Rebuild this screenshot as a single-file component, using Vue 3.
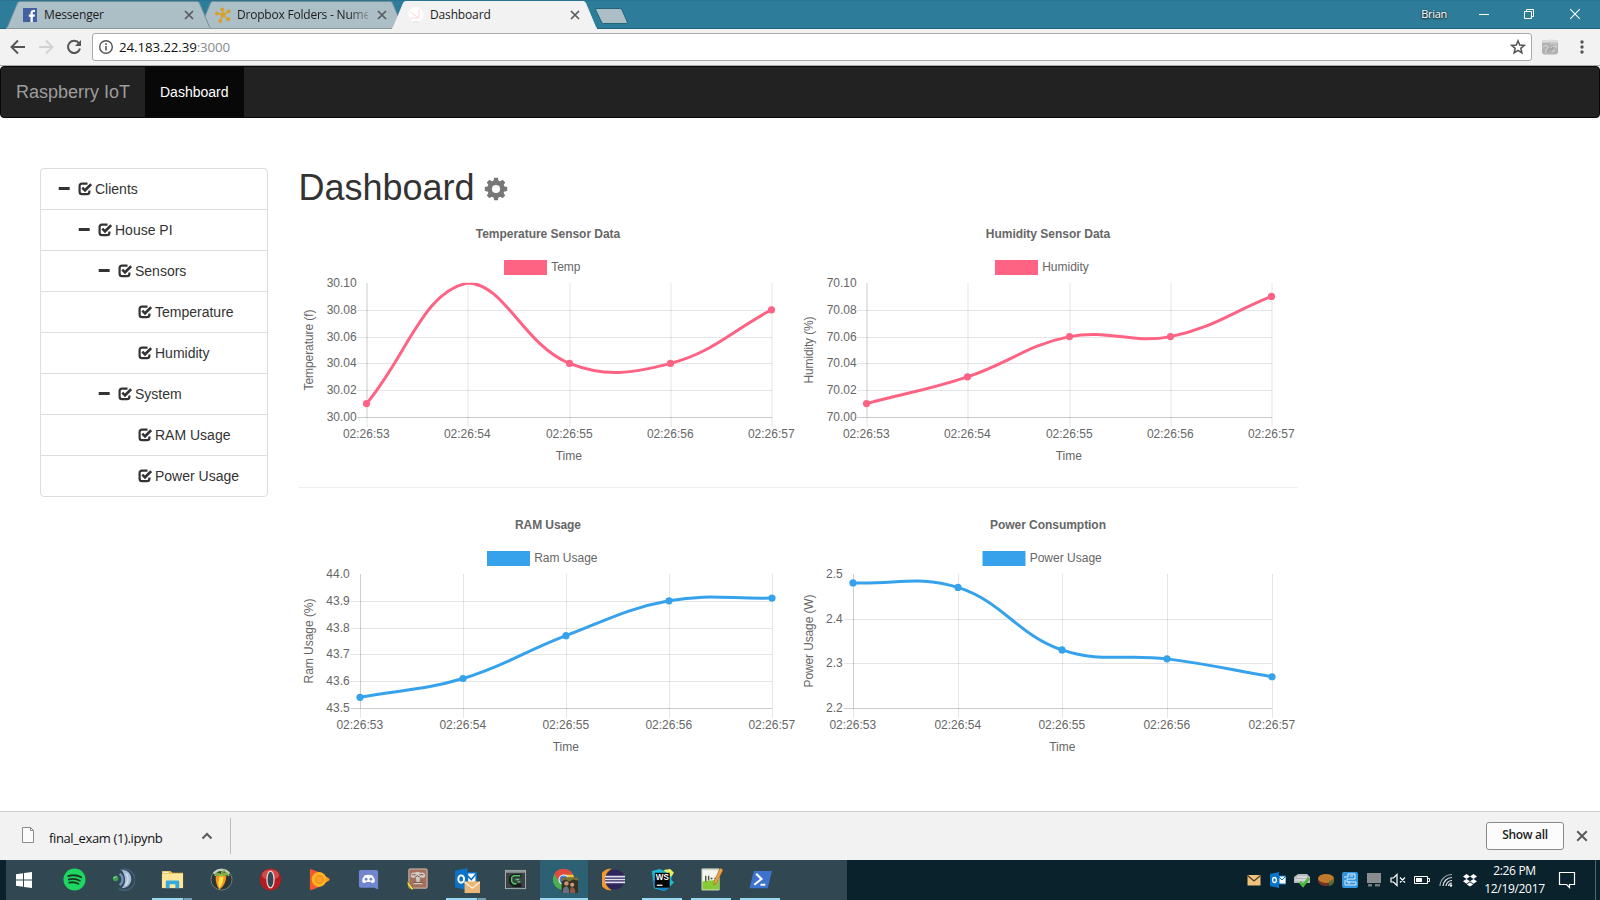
<script setup>
import { h } from 'vue'

const tabs = [
  { title: 'Messenger', icon: 'fb', cls: 'first' },
  { title: 'Dropbox Folders - Nume', icon: 'hub', cls: 'second' },
  { title: 'Dashboard', icon: 'pi', cls: 'active' },
]

const tree = [
  { label: 'Clients', level: 0, open: true },
  { label: 'House PI', level: 1, open: true },
  { label: 'Sensors', level: 2, open: true },
  { label: 'Temperature', level: 3 },
  { label: 'Humidity', level: 3 },
  { label: 'System', level: 2, open: true },
  { label: 'RAM Usage', level: 3 },
  { label: 'Power Usage', level: 3 },
]

const times = ['02:26:53', '02:26:54', '02:26:55', '02:26:56', '02:26:57']
const TOP = 66
const BOTTOM = 200

// Cubic smoothing with tension 0.4, control points kept inside the plot area
function spline(pts) {
  const t = 0.4
  const clamp = (y) => Math.max(TOP, Math.min(BOTTOM, y))
  const ctl = pts.map((p, i) => {
    const a = pts[i - 1] || p
    const b = pts[i + 1] || p
    const d1 = Math.hypot(p.x - a.x, p.y - a.y)
    const d2 = Math.hypot(b.x - p.x, b.y - p.y)
    const f1 = (t * d1) / (d1 + d2)
    const f2 = (t * d2) / (d1 + d2)
    return {
      px: p.x - f1 * (b.x - a.x), py: clamp(p.y - f1 * (b.y - a.y)),
      nx: p.x + f2 * (b.x - a.x), ny: clamp(p.y + f2 * (b.y - a.y)),
    }
  })
  let d = `M${pts[0].x} ${pts[0].y}`
  for (let i = 1; i < pts.length; i++) {
    d += `C${ctl[i - 1].nx} ${ctl[i - 1].ny} ${ctl[i].px} ${ctl[i].py} ${pts[i].x} ${pts[i].y}`
  }
  return d
}

function makeChart(c) {
  const pts = c.values.map((v, i) => ({
    x: c.xs[i] - 0.5,
    y: BOTTOM - ((BOTTOM - TOP) * (v - c.min)) / (c.max - c.min),
  }))
  return { ...c, pts, dots: pts.filter((p) => p.y > TOP + 0.5), d: spline(pts) }
}

const wide = [69, 170, 272, 373, 474]
const six = [66, 93.5, 120.5, 146.5, 173.5, 200.5]
const rows = [
  [
    makeChart({ id: 't', title: 'Temperature Sensor Data', tw: 144.5, legend: 'Temp', lx: 206, axis: 'Temperature (f)', aw: 81, color: '#ff6384', xs: wide, ys: six,
      labels: ['30.10', '30.08', '30.06', '30.04', '30.02', '30.00'], min: 30, max: 30.1, values: [30.01, 30.1, 30.04, 30.04, 30.08] }),
    makeChart({ id: 'h', title: 'Humidity Sensor Data', tw: 124.5, legend: 'Humidity', lx: 197, axis: 'Humidity (%)', aw: 67, color: '#ff6384', xs: wide, ys: six,
      labels: ['70.10', '70.08', '70.06', '70.04', '70.02', '70.00'], min: 70, max: 70.1, values: [70.01, 70.03, 70.06, 70.06, 70.09] }),
  ],
  [
    makeChart({ id: 'r', title: 'RAM Usage', tw: 66, legend: 'Ram Usage', lx: 189, axis: 'Ram Usage (%)', aw: 85, color: '#36a2eb', xs: [62.5, 165.5, 268.5, 371.5, 474.5], ys: six,
      labels: ['44.0', '43.9', '43.8', '43.7', '43.6', '43.5'], min: 43.5, max: 44, values: [43.54, 43.61, 43.77, 43.9, 43.91] }),
    makeChart({ id: 'p', title: 'Power Consumption', tw: 116, legend: 'Power Usage', lx: 184.5, axis: 'Power Usage (W)', aw: 93, color: '#36a2eb', xs: [55.5, 160.5, 264.5, 369.5, 474.5], ys: [66, 111.5, 155.5, 200.5],
      labels: ['2.5', '2.4', '2.3', '2.2'], min: 2.2, max: 2.5, values: [2.48, 2.47, 2.33, 2.31, 2.27] }),
  ],
]

const Cross = (props) =>
  h('svg', { width: props.size, height: props.size, viewBox: '0 0 10 10' }, [
    h('path', { d: 'M1 1L9 9M9 1L1 9', stroke: props.color, 'stroke-width': props.w, fill: 'none' }),
  ])
Cross.props = ['size', 'color', 'w']
</script>

<template>
  <div class="screen">
    <header class="titlebar">
      <div class="tabs">
        <div v-for="t in tabs" :key="t.title" class="tab" :class="t.cls">
          <svg class="tab-shape" width="205" height="29" viewBox="0 0 205 29">
            <path d="M0 29V28.500L1.500 27L11.500 3Q12 1.500 14 1.500H191Q193 1.500 193.500 3L203.500 27L205 28.500V29Z" />
            <path v-if="t.cls !== 'active'" class="base" d="M2 28.500H203" />
          </svg>
          <svg v-if="t.icon === 'fb'" class="fav" width="16" height="16" viewBox="0 0 16 16">
            <rect x="1" y="1" width="14" height="14" fill="#4460a0" />
            <path d="M10.800 15V9.700H12.600L12.900 7.500H10.800V6.200C10.800 5.500 11 5 12 5H13V3.100C12.700 3.100 12 3 11.300 3C9.600 3 8.500 4 8.500 5.900V7.500H6.800V9.700H8.500V15Z" fill="#fff" />
          </svg>
          <svg v-else-if="t.icon === 'hub'" class="fav" width="16" height="16" viewBox="0 0 16 16">
            <path d="M8 8L7.300 2.500M8 8L13.500 4.500M8 8L13 12.500M8 8L5.300 13.500M8 8L2.500 6.500" stroke="#d9a62c" stroke-width="1.500" />
            <g fill="#d5a02b"><circle cx="8" cy="8" r="2.500" /><circle cx="7.200" cy="2.300" r="1.900" /><circle cx="13.600" cy="4.300" r="1.900" /><circle cx="13.300" cy="12.300" r="2" /><circle cx="5.300" cy="13.900" r="2" /><circle cx="2" cy="6.500" r="1.900" /></g>
          </svg>
          <svg v-else class="fav" width="16" height="16" viewBox="0 0 16 16">
            <circle cx="8" cy="7.500" r="7.500" fill="#fff" />
            <path d="M2 5L11 11V2M2 11H10" stroke="#fbd9d9" fill="none" />
            <path d="M5 15.500L8 14.500L11 15.500" stroke="#ddd" fill="none" />
          </svg>
          <span class="tab-title">{{ t.title }}</span>
          <Cross class="tab-close" :size="10" color="#555b5e" :w="1.700" />
        </div>
        <svg class="newtab" width="34" height="18" viewBox="0 0 34 18">
          <path d="M.700 3Q.200 1.500 2 1.500H24.500Q26.500 1.500 27 3L32.300 15Q33 16.500 31 16.500H8.500Q7 16.500 6.500 15Z" fill="#adbfc6" stroke="#23647d" />
        </svg>
      </div>
      <div class="winctl">
        <span class="user">Brian</span>
        <svg width="12" height="12" viewBox="0 0 12 12"><path d="M1 6.500H11" stroke="#fff" /></svg>
        <svg width="12" height="12" viewBox="0 0 12 12"><path d="M1.500 3.500H8.500V10.500H1.500ZM3.500 3.500V1.500H10.500V8.500H8.500" fill="none" stroke="#fff" /></svg>
        <Cross :size="12" color="#fff" :w="0.900" />
      </div>
    </header>

    <div class="toolbar">
      <svg width="16" height="16" viewBox="0 0 16 16"><path d="M15 8H2.500M8 1.500L1.500 8L8 14.500" fill="none" stroke="#555" stroke-width="1.900" /></svg>
      <svg width="16" height="16" viewBox="0 0 16 16"><path d="M1 8H13.500M8 1.500L14.500 8L8 14.500" fill="none" stroke="#d2d2d2" stroke-width="1.900" /></svg>
      <svg width="16" height="16" viewBox="0 0 16 16"><path d="M13 4.200A6.100 6.100 0 1 0 14 9.500" fill="none" stroke="#555" stroke-width="2" /><path d="M15 1V7H9Z" fill="#555" /></svg>
      <div class="omnibox">
        <svg width="16" height="16" viewBox="0 0 16 16"><circle cx="8" cy="8" r="6.300" fill="none" stroke="#555" stroke-width="1.400" /><path d="M8 7V11.500M8 4.200V5.900" stroke="#555" stroke-width="1.600" /></svg>
        <span class="url">24.183.22.39<i>:3000</i></span>
        <svg class="star" width="16" height="16" viewBox="0 0 16 16"><path d="M8 1.800L9.700 6.100L14.300 6.400L10.800 9.300L11.900 13.800L8 11.300L4.100 13.800L5.200 9.300L1.700 6.400L6.300 6.100Z" fill="none" stroke="#555" stroke-width="1.500" /></svg>
      </div>
      <svg class="ext" width="16" height="16" viewBox="0 0 16 16"><path d="M0 2H16V14L14 15.500H2L0 14Z" fill="#b2b2b2" /><path d="M0 1H6L7 .500H11L12 1H16V3.500H0Z" fill="#ddd" /><path d="M1 8L4 6L6 8L4 11V14M8 5L15 4M9 9L14 6V9M10 13L13 11" stroke="#cfcfcf" stroke-width="1.200" fill="none" /><path d="M5 13L8 9M11 8L9 11" stroke="#999" fill="none" /></svg>
      <svg class="dots" width="4" height="14" viewBox="0 0 4 14"><g fill="#555"><circle cx="2" cy="2" r="1.700" /><circle cx="2" cy="7" r="1.700" /><circle cx="2" cy="12" r="1.700" /></g></svg>
    </div>

    <nav class="navbar">
      <span class="brand">Raspberry IoT</span>
      <span class="navlink">Dashboard</span>
    </nav>

    <main class="page">
      <ul class="tree">
        <li v-for="n in tree" :key="n.label" :class="'lv' + n.level">
          <svg v-if="n.open" class="minus" width="14" height="14" viewBox="0 0 14 14"><rect x="1.700" y="5" width="11" height="3" rx=".5" fill="#333" /></svg>
          <svg class="check" width="14" height="14" viewBox="0 0 14 14">
            <path d="M9.500 1.600H4Q1.600 1.600 1.600 4V9.800Q1.600 12.200 4 12.200H9Q11.400 12.200 11.400 9.800V8.500" fill="none" stroke="#333" stroke-width="2.200" />
            <path d="M4.300 5.600L7 8.300L13.200 2.200" fill="none" stroke="#333" stroke-width="2.600" />
          </svg>
          <span>{{ n.label }}</span>
        </li>
      </ul>

      <section class="content">
        <h1>Dashboard
          <svg class="gear" width="24" height="24" viewBox="-12 -12 24 24">
            <g fill="#777">
              <path v-for="a in 8" :key="a" d="M-2.900 -6L-1.900 -11.200H1.900L2.900 -6Z" :transform="`rotate(${a * 45})`" />
            </g>
            <circle r="6.400" fill="none" stroke="#777" stroke-width="4.600" />
          </svg>
        </h1>
        <template v-for="(row, ri) in rows" :key="ri">
          <hr v-if="ri" />
          <div class="row">
            <svg v-for="c in row" :key="c.id" class="chart" width="500" height="250" viewBox="0 0 500 250">
              <clipPath :id="'clip-' + c.id"><rect x="50" y="65.700" width="440" height="140" /></clipPath>
              <text class="ttl" x="250" y="21" :textLength="c.tw">{{ c.title }}</text>
              <rect :x="c.lx" y="43" width="43" height="15" :fill="c.color" />
              <text :x="c.lx + 47.200" y="54">{{ c.legend }}</text>
              <g v-for="(y, i) in c.ys" :key="'y' + i">
                <path v-if="i" class="grid" :class="{ zero: i === c.ys.length - 1 }" :d="`M${c.xs[0] - 10} ${y}H474`" />
                <text class="end" :x="c.xs[0] - (c.xs[0] % 1) - 10.300" :y="Math.floor(y) + 4">{{ c.labels[i] }}</text>
              </g>
              <g v-for="(x, i) in c.xs" :key="'x' + i">
                <path class="grid" :d="`M${x} 66V210`" />
                <path v-if="!i" class="grid" :d="`M${x} 66V200`" />
                <text class="mid" :x="x - 0.700" y="221">{{ times[i] }}</text>
              </g>
              <text class="mid" :x="(c.xs[0] + c.xs[4]) / 2 - 0.700" y="243">Time</text>
              <text class="mid" transform="translate(15 133) rotate(-90)" :textLength="c.aw">{{ c.axis }}</text>
              <path :d="c.d" fill="none" :stroke="c.color" stroke-width="3" :clip-path="`url(#clip-${c.id})`" />
              <circle v-for="(p, i) in c.dots" :key="'d' + i" :cx="p.x" :cy="p.y" r="3.600" :fill="c.color" />
            </svg>
          </div>
        </template>
      </section>
    </main>

    <div class="shelf">
      <svg class="file" width="14" height="17" viewBox="0 0 14 17"><path d="M1.500 .500H9.500L12.500 3.500V15.500H1.500Z" fill="#fbfbfb" stroke="#8c8c8c" /><path d="M9.500 .500V3.500H12.500" fill="none" stroke="#8c8c8c" /></svg>
      <span class="fname">final_exam (1).ipynb</span>
      <svg class="chev" width="12" height="8" viewBox="0 0 12 8"><path d="M1.500 6.500L6 2L10.500 6.500" fill="none" stroke="#5a5a5a" stroke-width="2" /></svg>
      <span class="sep"></span>
      <button>Show all</button>
      <Cross class="shelf-x" :size="12" color="#5a5a5a" :w="1.600" />
    </div>

    <footer class="taskbar">
      <div class="apps">
        <div class="app start"><svg width="16" height="16" viewBox="0 0 16 16"><path d="M0 2.200L7 1.200V7.500H0ZM8 1L16 0V7.500H8ZM0 8.500H7V14.800L0 13.800ZM8 8.500H16V16L8 15Z" fill="#fff" /></svg></div>
        <div class="app"><svg viewBox="0 0 24 24"><circle cx="12" cy="12" r="11.500" fill="#1ed760" /><path d="M5.500 8.500C10 7 15 7.500 19 9.700M6 12C10 10.900 14 11.300 17.500 13.300M6.500 15.300C10 14.500 13 14.800 16 16.500" fill="none" stroke="#193826" stroke-width="1.900" stroke-linecap="round" /></svg></div>
        <div class="app"><svg viewBox="0 0 24 24"><path d="M8 2.500A11 11 0 1 1 7 21.500" fill="none" stroke="#41607d" stroke-width="1.600" /><path d="M10 2C17 2 21 7 20 13C19 18 15 21 10 21C13 18 14 15 13.500 11C13 7 12 5 10 2Z" fill="#a9bfd9" /><path d="M8 6C12 9 12 15 8 18" stroke="#6f8fb5" stroke-width="2.500" fill="none" /><path d="M15 6C18 10 17 15 14 18" stroke="#d3dfec" stroke-width="1.500" fill="none" /><circle cx="3.800" cy="11" r="2.800" fill="#38a453" /><path d="M1.500 10.500L5 9" stroke="#a4d8ac" /></svg></div>
        <div class="app open double"><svg viewBox="0 0 24 24"><path d="M1 3H10L12 5H23V20H1Z" fill="#e9bd55" /><path d="M1 6H23V21H1Z" fill="#ffe69a" /><path d="M2 4.500H8" stroke="#fff" /><path d="M5 21V14Q5 13 6 13H18Q19 13 19 14V21H15V17H9V21Z" fill="#35a9df" /></svg></div>
        <div class="app"><svg viewBox="0 0 24 24"><circle cx="12" cy="12" r="11" fill="#2b3436" stroke="#71817e" /><path d="M4 6A10 10 0 0 1 20 6" stroke="#c8d0cb" stroke-width="2.500" fill="none" /><path d="M6 9C8 7 12 8 17 8C17 14 14 20 9.500 22.500C7 18 5.500 13 6 9Z" fill="#f9931b" /><path d="M10 9C9 14 8 17 10 21C13 17 14 13 14 9Z" fill="#ffe64c" /><path d="M12 8C9 4 6 5 5 8C8 7 10 8 12 8C15 4 19 4 20 8C17 6 15 8 12 8C11 4 13 2 16 2" fill="#74a83b" stroke="#97c850" /></svg></div>
        <div class="app"><svg viewBox="0 0 24 24"><ellipse cx="12" cy="12" rx="11" ry="11.500" fill="#b51c20" /><ellipse cx="12" cy="7" rx="9" ry="5.500" fill="#df5b58" opacity=".7" /><ellipse cx="12" cy="12" rx="3.700" ry="8.700" fill="#314751" stroke="#e9dada" stroke-width="1.300" /></svg></div>
        <div class="app"><svg viewBox="0 0 24 24"><path d="M2 1Q10 3 14 6L22 11Q23 12 22 13L14 18Q9 22 2 23Z" fill="#f5572e" /><path d="M17 8L22 11Q23 12 22 13L17 16Z" fill="#ef9c28" /><circle cx="11.500" cy="12" r="7.700" fill="#ffb51f" /><circle cx="12" cy="12" r="4" fill="#f9a523" stroke="#f18727" stroke-width="1.200" /></svg></div>
        <div class="app"><svg viewBox="0 0 24 24"><path d="M4 2H20Q22 2 22 4V22.500L18 20.500H4Q2 20.500 2 18.500V4Q2 2 4 2Z" fill="#7186cf" /><path d="M8 7.500Q12 6.500 16 7.500Q19 11 18.500 14.500L16 16L14.500 14.700H9.500L8 16L5.500 14.500Q5 11 8 7.500Z" fill="#fff" /><circle cx="9.500" cy="11.800" r="1.500" fill="#7186cf" /><circle cx="14.500" cy="11.800" r="1.500" fill="#7186cf" /></svg></div>
        <div class="app"><svg viewBox="0 0 24 24"><rect x="3" y="1" width="19" height="20" rx="1" fill="#a4705c" stroke="#d9c3b5" /><path d="M5 8Q5 4 9 5Q12 3 15 5Q20 4 20 8Q20 11 15 10L14 14L18 17H7L11 14L10 10Q5 11 5 8Z" fill="#d3cac4" /><path d="M6 7H10M14 7H18M9 10L12 8L15 10M8 15H17" stroke="#725244" fill="none" /><path d="M1 14L3 15L8 22L6 23L2 18Z" fill="#f2e53b" stroke="#57542b" stroke-width=".6" /></svg></div>
        <div class="app open double"><svg class="big" viewBox="0 0 28 28"><path d="M2 4L15 1V24L2 21Z" fill="#0a73c6" /><path d="M15 6H24V18H15Z" fill="#fff" stroke="#0a73c6" stroke-width="1.500" /><path d="M15 9L19 13L24 7" fill="none" stroke="#0a73c6" stroke-width="1.600" /><ellipse cx="8.500" cy="12.500" rx="3" ry="3.800" fill="none" stroke="#fff" stroke-width="2" /><rect x="12" y="15" width="16" height="12" fill="#eab778" /><path d="M12 15.500L20 22L28 15.500" fill="none" stroke="#fff2d9" stroke-width="1.300" /></svg></div>
        <div class="app"><svg viewBox="0 0 24 24"><rect x="1.500" y="2.500" width="21" height="19" fill="#3b4144" stroke="#a9b0b1" /><path d="M2 3H22V5H2Z" fill="#8f9798" /><path d="M18 8H10L7 10V15L10 18H18" stroke="#171b1c" stroke-width="3.500" fill="none" /><path d="M17 8H10L8 10V14L10 16.500H13M12 12H16M14 14.500H17" stroke="#52c969" stroke-width="1.500" fill="none" /></svg></div>
        <div class="app open full"><svg class="big" viewBox="0 0 28 28"><circle cx="13" cy="13" r="11" fill="#4caf50" /><path d="M3.500 7.500A11 11 0 0 1 23 8H13L8.500 15.500Z" fill="#df4b3f" /><path d="M23 8A11 11 0 0 1 13 24L18 15L13 8Z" fill="#f6c23c" /><circle cx="13" cy="13" r="5.300" fill="#fff" /><circle cx="13" cy="13" r="4.200" fill="#4387ed" /><rect x="11" y="11" width="17" height="16" fill="#35331f" /><path d="M11 11H28V14L23 13L19 15L15 13L11 15Z" fill="#77743a" /><circle cx="16" cy="17" r="2.300" fill="#c69680" /><circle cx="22" cy="18.500" r="2.100" fill="#d19d84" /><path d="M12 27Q12 20 16 20Q19 21 19 27Z" fill="#687085" /><path d="M20 27Q19 21 22 21Q26 22 25 27Z" fill="#8c5a48" /></svg></div>
        <div class="app"><svg viewBox="0 0 24 24"><path d="M9 1A11 11 0 0 0 9 23A13 13 0 0 1 9 1Z" fill="#f39a2b" stroke="#f39a2b" /><circle cx="13.500" cy="12" r="10.500" fill="#2d255c" /><path d="M3 9H24M3 12H24M3 15H24" stroke="#e2dff0" stroke-width="1.700" /></svg></div>
        <div class="app open"><svg viewBox="0 0 24 24"><path d="M1 3L9 1L14 3L20 1L23 5L21 12L24 15L18 21L14 24L3 21Z" fill="#20b9d4" /><path d="M13 2L20 1L24 5L21 9Z" fill="#e8ee63" /><path d="M1 12L4 20L15 24L18 18Z" fill="#167fce" /><rect x="4" y="5" width="15.500" height="15.500" fill="#050505" /><text class="ws" x="5" y="13">WS</text><path d="M6 18H12" stroke="#fff" stroke-width="1.300" /></svg></div>
        <div class="app open"><svg viewBox="0 0 24 24"><path d="M2 1H20V23H2Z" fill="#f5f7ec" stroke="#b8c1b2" /><path d="M2.500 14L20 12V22.500H2.500Z" fill="#85cb35" /><path d="M2 1.500H20" stroke="#cbd1c8" stroke-width="2" stroke-dasharray="1 1" /><path d="M6 8V14M9 8V13M11 11H13M15 11H17" stroke="#454b3f" stroke-width="1.400" /><path d="M21 0L24 2L17 16L14.500 17.500L14.500 14.500Z" fill="#e9a63b" stroke="#a6632f" stroke-width=".7" /></svg></div>
        <div class="app open"><svg viewBox="0 0 24 24"><path d="M5 3H24L19.500 21H.500Z" fill="#3d73cf" /><path d="M7.500 6L13 11.500L5.500 17.500M12 17.500H17" fill="none" stroke="#fff" stroke-width="2.200" /></svg></div>
      </div>

      <div class="tray">
        <svg width="16" height="16" viewBox="0 0 16 16"><rect x="1.500" y="3" width="13" height="10.500" fill="#efc27d" /><path d="M1.500 3.500L8 9L14.500 3.500" stroke="#533d23" fill="none" stroke-width="1.300" /></svg>
        <svg width="16" height="16" viewBox="0 0 16 16"><path d="M0 2L9 0V16L0 14Z" fill="#0875cb" /><path d="M9 4H16V12H9Z" fill="#fff" stroke="#0875cb" /><path d="M9 5L12 8L16 4" fill="none" stroke="#0875cb" /><ellipse cx="4.500" cy="8" rx="1.900" ry="2.500" fill="none" stroke="#fff" stroke-width="1.300" /></svg>
        <svg width="16" height="16" viewBox="0 0 16 16"><path d="M0 5L4 2H13L16 5V11H0V5Z" fill="#b7b9bc" /><path d="M3 5H13M1 8H14" stroke="#efefef" /><path d="M6 10L9 13.500L15 6" fill="none" stroke="#4dbb42" stroke-width="2.800" /></svg>
        <svg width="16" height="16" viewBox="0 0 16 16"><path d="M0 6V10Q2 14 8 14Q15 14 16 10V6Z" fill="#58372c" /><ellipse cx="8" cy="6.500" rx="8" ry="4.500" fill="#c07a2b" /><path d="M0 8Q6 12 9 11V14Q1 13 0 8Z" fill="#7d3022" /><path d="M11 9L16 7V10Q15 13 11 14Z" fill="#5b7234" opacity=".8" /></svg>
        <svg width="16" height="16" viewBox="0 0 16 16"><rect width="16" height="16" rx="2" fill="#3396dc" /><path d="M2 5H6V2H13V7H5V10H14V13H3V8M8 4H11M7 12V9" stroke="#d8efff" fill="none" /></svg>
        <svg width="16" height="16" viewBox="0 0 16 16"><path d="M1 1H15V11H1Z" fill="#8a8d8e" /><path d="M2 12H6V14.500H2ZM9 12H14V14.500H9Z" fill="#73797b" /></svg>
        <svg width="16" height="16" viewBox="0 0 16 16"><path d="M1 6H3.500L7 2.500V13.500L3.500 10H1ZM10 5.500L15 10.500M15 5.500L10 10.500" fill="none" stroke="#fff" stroke-width="1.200" /></svg>
        <svg width="16" height="16" viewBox="0 0 16 16"><path d="M.500 4.500H13.500V11.500H.500ZM14 6.500H15.500V9.500H14" fill="none" stroke="#fff" /><rect x="2" y="6" width="6" height="4" fill="#fff" /></svg>
        <svg width="16" height="16" viewBox="0 0 16 16"><g fill="none" stroke="#e8ecee" stroke-width="1.200"><path d="M2 14A12 12 0 0 1 14 2.500" opacity=".65" /><path d="M5 14A9 9 0 0 1 14 5.500" /><path d="M8 14A6 6 0 0 1 14 8.500" /><path d="M10.500 14A3.500 3.500 0 0 1 14 11" /></g><circle cx="13" cy="13.500" r="1.200" fill="#fff" /></svg>
        <svg width="16" height="16" viewBox="0 0 16 16"><path d="M4.500 2L8 4.500L4.500 7L1 4.500ZM11.500 2L15 4.500L11.500 7L8 4.500ZM4.500 7L8 9.300L4.500 11.700L1 9.300ZM11.500 7L15 9.300L11.500 11.700L8 9.300ZM4.800 12.500L8 10.300L11.200 12.500L8 14.500Z" fill="#fff" /></svg>
        <div class="clock"><span class="tm">2:26 PM</span><span>12/19/2017</span></div>
        <svg class="note" width="18" height="18" viewBox="0 0 18 18"><path d="M1.500 1.500H16.500V13.500H11.500V16.500L8.500 13.500H1.500Z" fill="none" stroke="#fff" stroke-width="1.200" /></svg>
        <span class="peek"></span>
      </div>
    </footer>
  </div>
</template>

<style>
html, body { margin: 0; overflow: hidden; background: #fff; }
</style>

<style scoped>
* { box-sizing: border-box; }
.screen { width: 1600px; height: 900px; display: flex; flex-direction: column; background: #fff; overflow: hidden; font-family: "Liberation Sans", Arial, sans-serif; }
svg { display: block; flex: none; }

.titlebar { height: 29px; flex: none; background: #2d7d9a; display: flex; justify-content: space-between; border-top: 1px solid #2a7490; box-shadow: inset 0 -1px #23647d; font-family: "Open Sans", sans-serif; }
.tabs { display: flex; padding-left: 6px; margin-top: -1px; height: 29px; }
.tab { position: relative; width: 205px; height: 29px; margin-right: -12px; display: flex; align-items: center; padding: 0 17px 0 16px; }
.tab.first { z-index: 2; }
.tab.second { z-index: 1; }
.tab.active { z-index: 3; }
.tab-shape { position: absolute; left: 0; top: 0; z-index: -1; fill: #adbfc6; stroke: #6f8f9b; stroke-width: 1; }
.active .tab-shape { fill: #f2f2f2; stroke: #f2f2f2; }
.base { stroke: #8a989e; }
.fav { margin-top: 1px; }
.tab-title { flex: 1; margin-left: 6px; font-size: 12px; letter-spacing: -.15px; line-height: 18px; color: #1c1c1c; white-space: nowrap; overflow: hidden; }
.second .tab-title { flex: none; width: 131px; letter-spacing: -.21px; margin-right: 9px; -webkit-mask-image: linear-gradient(90deg, #000 85%, rgba(0,0,0,.25)); mask-image: linear-gradient(90deg, #000 85%, rgba(0,0,0,.25)); }
.tab-close { margin-top: 1px; }
.newtab { margin: 7px 0 0 10px; }
.winctl { display: flex; align-items: center; padding-right: 19px; height: 26px; }
.user { font-size: 11px; color: #fff; margin-right: 31px; letter-spacing: -.3px; text-shadow: 0 1px 2px #222, 0 0 2px #333; line-height: 16px; }
.winctl svg + svg { margin-left: 33px; }
.winctl svg + svg + svg { margin-left: 34px; }

.toolbar { height: 37px; flex: none; background: #f2f2f2; border-bottom: 1px solid #a9a9a9; display: flex; align-items: center; padding: 0 16px 0 10px; }
.toolbar > svg + svg { margin-left: 12px; }
.omnibox { margin-left: 10px; width: 1440px; height: 28px; border: 1px solid #a8a8a8; border-radius: 3px; background: #fff; display: flex; align-items: center; padding: 0 5px; }
.url { font: 13.300px/18px "Open Sans", sans-serif; color: #111; margin-left: 5px; letter-spacing: -.1px; }
.url i { font-style: normal; color: #888; }
.star { margin-left: auto; }
.ext { margin-left: 10px; }
.toolbar > .dots { margin-left: auto; }

.navbar { height: 52px; flex: none; background: #222; border: 1px solid #080808; border-radius: 4px; display: flex; }
.brand { width: 144px; padding: 15px 0 0 15px; font-size: 18px; line-height: 20px; color: #9d9d9d; }
.navlink { width: 99px; background: #080808; color: #fff; font-size: 14px; line-height: 20px; padding: 15px 0 0 15px; }

.page { flex: 1; min-height: 0; display: flex; padding: 50px 0 0 40px; }
.tree { list-style: none; margin: 0; padding: 0; width: 228px; height: 329px; border: 1px solid #ddd; border-radius: 4px; }
.tree li { height: 41px; display: flex; align-items: center; font-size: 14px; line-height: 20px; color: #333; border-top: 1px solid #ddd; padding-left: 16px; }
.tree li:first-child { height: 40px; border-top: 0; }
.tree span { margin-left: 3px; }
.minus { margin-right: 7px; }
.check { margin-top: -1px; }
.tree .lv1 { padding-left: 36px; }
.tree .lv2 { padding-left: 56px; }
.tree .lv3 { padding-left: 97px; }
.content { margin-left: 30px; width: 1000px; }
h1 { margin: 0 0 10px; height: 39px; font-size: 36px; font-weight: 400; line-height: 39px; color: #333; display: flex; align-items: center; padding-left: .5px; }
.gear { margin: 3px 0 0 9.500px; }
.row { display: flex; height: 250px; }
hr { margin: 20px 0; border: 0; border-top: 1px solid #eee; height: 0; }
.chart text { font-size: 12px; fill: #666; white-space: pre; }
.chart .ttl { font-weight: 700; text-anchor: middle; }
.chart .mid { text-anchor: middle; }
.chart .end { text-anchor: end; }
.grid { stroke: rgba(0,0,0,.1); stroke-width: 1; }
.grid.zero { stroke: rgba(0,0,0,.2); }

.shelf { height: 49px; flex: none; background: #f2f2f2; border-top: 1px solid #cfcfcf; display: flex; align-items: center; padding: 0 12px 0 21px; font-family: "Open Sans", sans-serif; }
.file { margin-top: -2px; }
.fname { margin-left: 14px; width: 152px; font-size: 13px; letter-spacing: -.37px; line-height: 20px; color: #111; padding-top: 4px; white-space: nowrap; }
.sep { margin-left: 17px; width: 1px; height: 36px; background: #bcbcbc; }
.shelf button { margin-left: auto; margin-top: -1px; width: 78px; height: 28px; border: 1px solid #8a8a8a; border-radius: 3px; background: #fcfcfc; font: 600 12px/16px "Open Sans", sans-serif; letter-spacing: -.35px; color: #222; padding: 0 0 1px; }
.shelf-x { margin-left: 12px; margin-top: -1px; }

.taskbar { height: 40px; flex: none; background: #0a222c; display: flex; justify-content: space-between; }
.apps { margin-left: 6px; width: 841px; background: #314751; display: flex; gap: 1px; }
.app { width: 48px; flex: none; position: relative; display: flex; align-items: center; justify-content: center; }
.app svg { width: 23px; height: 23px; margin-top: -1px; }
.app svg.big { width: 27px; height: 27px; margin-top: 1px; }
.app.start { width: 43px; padding-right: 7px; }
.app.start svg { width: 16px; height: 16px; }
.app.open::after { content: ""; position: absolute; left: 4px; right: 4px; bottom: 0; height: 2px; background: #99d9f0; }
.app.double::after { background: linear-gradient(90deg, #99d9f0 31px, #4f707e 31px, #4f707e 32px, #719fb1 32px); }
.app.full { background: #2d6073; }
.app.full::after { left: 0; right: 0; }
.ws { font: 700 8.500px "Liberation Sans", sans-serif; fill: #fff; }
.tray { display: flex; align-items: center; gap: 8px; height: 40px; }
.clock { width: 73px; margin-left: -8px; display: flex; flex-direction: column; align-items: center; font: 12px/18px "Open Sans", sans-serif; letter-spacing: -.33px; color: #fff; }
.note { margin-left: -1px; }
.peek { width: 5px; height: 40px; margin-left: 11px; border-left: 1px solid #52636b; }
</style>
